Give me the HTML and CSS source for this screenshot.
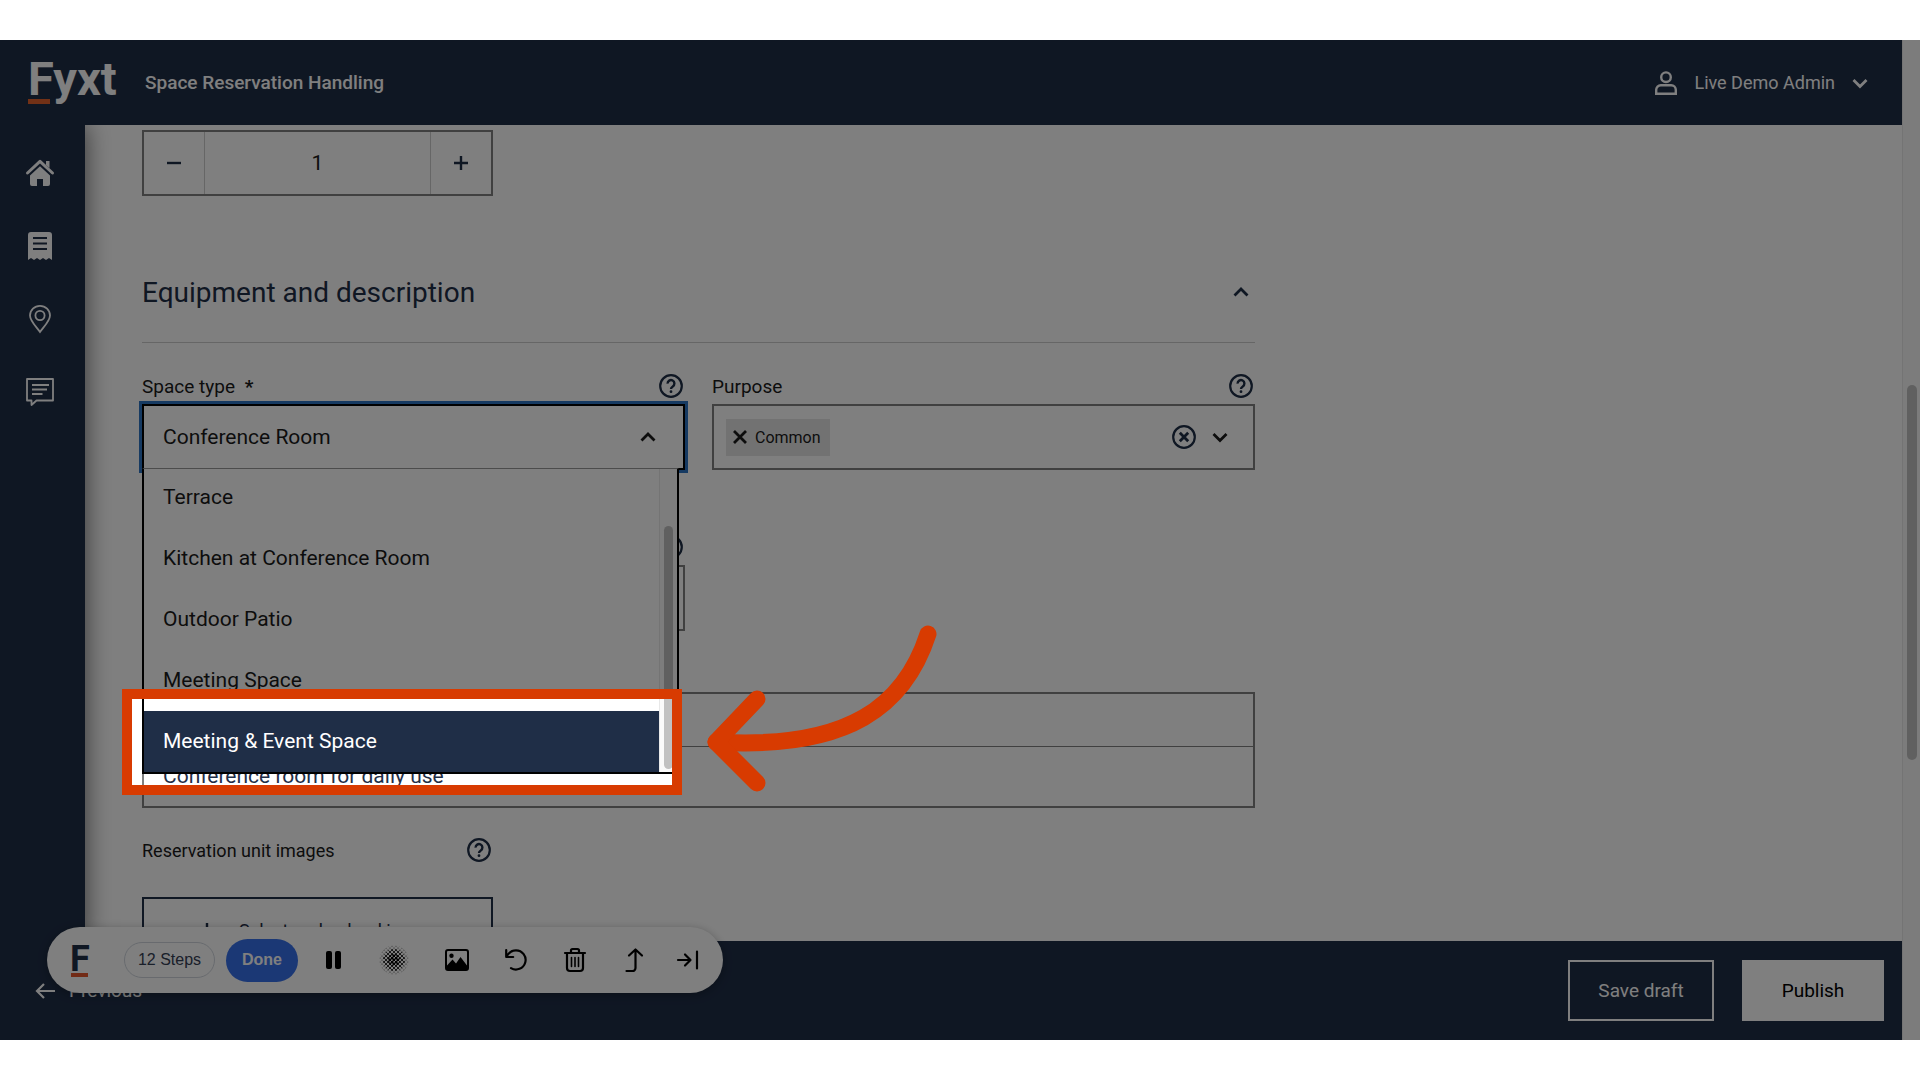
FILE: index.html
```html
<!DOCTYPE html>
<html lang="en">

<head>
  <meta charset="UTF-8">
  <meta name="viewport" content="width=device-width, initial-scale=1.0">
  <title>Space Reservation Handling</title>
  <link rel="stylesheet" href="styles.css">
</head>

<body>

  <svg class="sprite" aria-hidden="true">
    <symbol id="help" viewBox="0 0 24 24">
      <circle cx="12" cy="12" r="10.800" fill="none" stroke="currentColor" stroke-width="2.200" />
      <path d="M8.600 9.600a3.400 3.400 0 1 1 5.200 2.800c-1.200.8-1.800 1.300-1.800 2.600" fill="none" stroke="currentColor" stroke-width="2.400" />
      <circle cx="12" cy="17.700" r="1.400" fill="currentColor" />
    </symbol>
    <symbol id="chevron-down" viewBox="0 0 16 16">
      <path d="M1.500 5 8 11.500 14.500 5" fill="none" stroke="currentColor" stroke-width="2.800" />
    </symbol>
    <symbol id="chevron-up" viewBox="0 0 16 16">
      <path d="M1.500 11.500 8 5l6.500 6.500" fill="none" stroke="currentColor" stroke-width="2.800" />
    </symbol>
  </svg>

  <div class="app">
    <div class="page">

      <header class="header">
        <a class="logo" href="#">Fyxt</a>
        <span class="app-name">Space Reservation Handling</span>
        <button class="user-menu">
          <svg width="22" height="24" viewBox="0 0 22 24" fill="none" stroke="currentColor" stroke-width="2.400">
            <circle cx="11" cy="6.200" r="4.800" />
            <path d="M1.200 22.800v-4a4.600 4.600 0 0 1 4.600-4.600h10.400a4.600 4.600 0 0 1 4.600 4.600v4z" />
          </svg>
          Live Demo Admin
          <svg width="16" height="16"><use href="#chevron-down" /></svg>
        </button>
      </header>

      <div class="middle">
        <nav class="sidebar">
          <a href="#" aria-label="Home">
            <svg width="28" height="28" viewBox="0 0 28 28">
              <path d="M1.500 14 14 2.300 26.500 14" fill="none" stroke="currentColor" stroke-width="3" stroke-linecap="round" stroke-linejoin="round" />
              <path d="M20 2h3.500v7L20 6z" fill="currentColor" />
              <path d="M14 7.200 4 16.500V25a2 2 0 0 0 2 2h5v-7h6v7h5a2 2 0 0 0 2-2v-8.500z" fill="currentColor" />
            </svg>
          </a>
          <a href="#" aria-label="Reservations">
            <svg width="28" height="28" viewBox="0 0 28 28">
              <path d="M2 28V3a3 3 0 0 1 3-3h18a3 3 0 0 1 3 3v25l-3-2-3 2-3-2-3 2-3-2-3 2-3-2z" fill="currentColor" />
              <path class="icon-lines" d="M7 6h14M7 11.500h14M7 17h14" />
            </svg>
          </a>
          <a href="#" aria-label="Locations">
            <svg width="28" height="28" viewBox="0 0 28 28" fill="none" stroke="currentColor" stroke-width="1.800">
              <path d="M14 27C10 21.500 4 15.800 4 10.500a10 9.700 0 0 1 20 0C24 15.800 18 21.500 14 27z" />
              <circle cx="14" cy="10.500" r="4.600" />
            </svg>
          </a>
          <a href="#" aria-label="Messages">
            <svg width="28" height="28" viewBox="0 0 28 28" fill="none" stroke="currentColor" stroke-width="1.800">
              <path d="M1 1h26v21.500H10.500L5.500 27v-4.500H1z" stroke-linejoin="round" />
              <path d="M6 7h17M6 11.500h15M6 16h10.500" />
            </svg>
          </a>
        </nav>

        <main class="content">
          <div class="stepper">
            <button aria-label="Decrease"><svg width="16" height="16" viewBox="0 0 16 16"><path d="M1 8h14" stroke="currentColor" stroke-width="2.400" /></svg></button>
            <input type="text" value="1" aria-label="Amount">
            <button aria-label="Increase"><svg width="16" height="16" viewBox="0 0 16 16"><path d="M1 8h14M8 1v14" stroke="currentColor" stroke-width="2.400" /></svg></button>
          </div>

          <div class="section-head">
            <h2>Equipment and description</h2>
            <button class="icon-btn" aria-label="Collapse"><svg width="16" height="16"><use href="#chevron-up" /></svg></button>
          </div>

          <div class="fields">
            <div class="field">
              <div class="field-head">
                <label for="space-type">Space type <span class="required">*</span></label>
                <button class="icon-btn" aria-label="Help"><svg width="24" height="24"><use href="#help" /></svg></button>
              </div>
              <div class="select-wrap">
                <select class="box select" id="space-type">
                  <option>Conference Room</option>
                </select>
                <svg class="select-arrow" width="16" height="16"><use href="#chevron-up" /></svg>
                <div class="menu">
                  <ul class="menu-list" role="listbox">
                    <li role="option">Terrace</li>
                    <li role="option">Kitchen at Conference Room</li>
                    <li role="option">Outdoor Patio</li>
                    <li role="option">Meeting Space</li>
                    <li role="option" class="active" aria-selected="true">Meeting &amp; Event Space</li>
                  </ul>
                  <div class="menu-track"><div class="menu-thumb"></div></div>
                </div>
              </div>
            </div>

            <div class="field">
              <div class="field-head">
                <span>Purpose</span>
                <button class="icon-btn" aria-label="Help"><svg width="24" height="24"><use href="#help" /></svg></button>
              </div>
              <div class="box tags">
                <button class="tag">
                  <svg width="14" height="14" viewBox="0 0 14 14"><path d="M1 1l12 12M13 1 1 13" stroke="currentColor" stroke-width="2.800" /></svg>
                  Common
                </button>
                <button class="icon-btn clear" aria-label="Clear">
                  <svg width="24" height="24" viewBox="0 0 24 24" fill="none" stroke="currentColor">
                    <circle cx="12" cy="12" r="10.800" stroke-width="2.200" />
                    <path d="M7.800 7.800l8.400 8.400M16.200 7.800l-8.400 8.400" stroke-width="2.800" />
                  </svg>
                </button>
                <button class="icon-btn toggle" aria-label="Open"><svg width="16" height="16"><use href="#chevron-down" /></svg></button>
              </div>
            </div>

            <div class="field">
              <div class="field-head end">
                <button class="icon-btn" aria-label="Help"><svg width="24" height="24"><use href="#help" /></svg></button>
              </div>
              <input class="box" type="text" aria-label="Equipment">
            </div>
          </div>

          <div class="editor">
            <div class="editor-bar"></div>
            <textarea aria-label="Description">Conference room for daily use</textarea>
          </div>

          <div class="images">
            <div class="field-head">
              <span>Reservation unit images</span>
              <button class="icon-btn" aria-label="Help"><svg width="24" height="24"><use href="#help" /></svg></button>
            </div>
            <button class="upload">
              <svg width="16" height="16" viewBox="0 0 16 16"><path d="M1 8h14M8 1v14" stroke="currentColor" stroke-width="2.400" /></svg>
              Select and upload image
            </button>
          </div>
        </main>
      </div>

      <footer class="footer">
        <a class="previous" href="#">
          <svg width="20" height="16" viewBox="0 0 20 16" fill="none" stroke="currentColor" stroke-width="2.200"><path d="M9 1 2 8l7 7M2 8h18" /></svg>
          Previous
        </a>
        <button class="btn-outline">Save draft</button>
        <button class="btn-solid">Publish</button>
      </footer>
    </div>

    <div class="scrollbar"><div class="scroll-thumb"></div></div>

    <!-- recorder toolbar -->
    <div class="toolbar">
      <div class="mark">F</div>
      <button class="steps">12 Steps</button>
      <button class="done">Done</button>
      <div class="tools">
        <button aria-label="Pause">
          <svg width="20" height="24" viewBox="0 0 20 24"><rect x="3" y="3" width="6" height="18" rx="2" /><rect x="12" y="3" width="6" height="18" rx="2" /></svg>
        </button>
        <button aria-label="Blur">
          <svg width="30" height="30" viewBox="0 0 30 30">
            <defs>
              <pattern id="dots-s" width="4" height="4" patternUnits="userSpaceOnUse"><circle cx="1" cy="1" r=".5" /><circle cx="3" cy="3" r=".5" /></pattern>
              <pattern id="dots-m" width="4" height="4" patternUnits="userSpaceOnUse"><circle cx="1" cy="1" r="1" /><circle cx="3" cy="3" r="1" /></pattern>
              <pattern id="dots-l" width="4" height="4" patternUnits="userSpaceOnUse"><circle cx="1" cy="1" r="1.500" /><circle cx="3" cy="3" r="1.500" /></pattern>
            </defs>
            <circle cx="15" cy="15" r="14.500" fill="url(#dots-s)" />
            <circle cx="15" cy="15" r="11" fill="url(#dots-m)" />
            <circle cx="15" cy="15" r="6" fill="url(#dots-l)" />
          </svg>
        </button>
        <button aria-label="Image">
          <svg width="24" height="24" viewBox="0 0 24 24">
            <rect x="1" y="2" width="22" height="20" rx="2" fill="none" stroke="currentColor" stroke-width="2" />
            <circle cx="6.500" cy="7.800" r="2.200" />
            <path d="M2 21v-3.500l5.500-6 3.500 4 4.500-6.500 6.500 8.500V21z" />
          </svg>
        </button>
        <button aria-label="Undo">
          <svg width="22" height="24" viewBox="0 0 22 24" fill="none" stroke="currentColor" stroke-width="2.200" stroke-linecap="round" stroke-linejoin="round">
            <path d="M1.200 2v7h7M1.500 8.800C3.500 4.800 7 2.300 11 2.300a9.600 9.600 0 1 1-5 17.800" />
          </svg>
        </button>
        <button aria-label="Delete">
          <svg width="24" height="24" viewBox="0 0 24 24" fill="none" stroke="currentColor" stroke-width="2.200" stroke-linecap="round">
            <path d="M2 5h20M8 5V2.500A1.500 1.500 0 0 1 9.500 1h5A1.500 1.500 0 0 1 16 2.500V5M4 5v15a3 3 0 0 0 3 3h10a3 3 0 0 0 3-3V5" />
            <path d="M8.500 9.500v9M12 9.500v9M15.500 9.500v9" stroke-width="1.600" />
          </svg>
        </button>
        <button aria-label="Move">
          <svg width="20" height="24" viewBox="0 0 20 24" fill="none" stroke="currentColor" stroke-width="2.200" stroke-linecap="round" stroke-linejoin="round">
            <path d="M3.500 23h6a3 3 0 0 0 3-3V1.500M6 7.500l6.500-6 6.500 6" />
          </svg>
        </button>
        <button aria-label="Dock">
          <svg width="20" height="24" viewBox="0 0 20 24" fill="none" stroke="currentColor" stroke-width="2.200" stroke-linecap="round" stroke-linejoin="round">
            <path d="M-1 12h12M6 6.500l5.500 5.500L6 17.500M18 3.500v17" />
          </svg>
        </button>
      </div>
    </div>

    <!-- dims everything except the highlighted option -->
    <div class="spotlight"></div>
    <svg class="arrow" width="240" height="180" viewBox="0 0 240 180" fill="none" stroke="currentColor" stroke-width="17" stroke-linecap="round" stroke-linejoin="round">
      <path d="M228 14C205 85 150 130 16 122" />
      <path d="M57 79 16 122l41 41" />
    </svg>
  </div>

</body>

</html>
```

FILE: styles.css
```css
* {
  margin: 0;
  padding: 0;
  box-sizing: border-box;
}

body {
  height: 100vh;
  padding: 40px 0;
  background: #fff;
  color: #1a1a1a;
  font-family: Roboto, Arial, sans-serif;
  font-size: 19px;
}

button,
input,
select,
textarea {
  font: inherit;
  color: inherit;
  background: none;
  border: none;
  border-radius: 0;
}

button {
  cursor: pointer;
}

a {
  color: inherit;
  text-decoration: none;
}

svg {
  display: block;
  flex-shrink: 0;
  overflow: visible;
}

.sprite {
  position: absolute;
  width: 0;
  height: 0;
}

.app {
  position: relative;
  display: flex;
  height: 100%;
  overflow: hidden;
}

.page {
  flex: 1;
  min-width: 0;
  display: flex;
  flex-direction: column;
}

/* Header */
.header {
  position: relative;
  z-index: 2;
  display: flex;
  align-items: center;
  height: 85px;
  padding: 0 34px 0 28px;
  background: #1f2e47;
  color: #fff;
}

.logo {
  position: relative;
  width: 117px;
  padding-bottom: 8px;
  font-size: 47px;
  line-height: 60px;
  font-weight: 700;
}

.logo::after {
  content: "";
  position: absolute;
  left: 0;
  bottom: 13px;
  width: 22px;
  height: 5px;
  background: #e4622c;
}

.app-name {
  font-weight: 500;
}

.user-menu {
  display: flex;
  align-items: center;
  gap: 17px;
  margin-left: auto;
  font-size: 18px;
}

/* Sidebar */
.middle {
  flex: 1;
  min-height: 0;
  display: flex;
}

.sidebar {
  position: relative;
  z-index: 1;
  display: flex;
  flex-direction: column;
  align-items: center;
  gap: 45px;
  width: 85px;
  padding: 34px 5px 0 0;
  background: #1f2e47;
  color: #fff;
  box-shadow: 0 0 24px rgba(0, 0, 0, 0.6);
}

.icon-lines {
  stroke: #1f2e47;
  stroke-width: 2;
}

/* Form */
.content {
  flex: 1;
  min-width: 0;
  max-width: 1170px;
  padding: 5px 0 0 57px;
  overflow: hidden;
}

.stepper {
  display: flex;
  width: 351px;
  height: 66px;
  border: 2px solid #808080;
}

.stepper button {
  display: flex;
  align-items: center;
  justify-content: center;
  width: 60px;
  color: #1f2e47;
}

.stepper input {
  flex: 1;
  min-width: 0;
  border: solid #ccc;
  border-width: 0 1px;
  font-size: 21px;
  text-align: center;
}

.section-head {
  display: flex;
  align-items: center;
  justify-content: space-between;
  height: 101px;
  margin-top: 46px;
  padding-right: 6px;
  border-bottom: 1px solid #ccc;
  color: #1f2e47;
}

.section-head h2 {
  font-size: 28px;
  font-weight: 400;
}

.fields {
  display: grid;
  grid-template-columns: 1fr 1fr;
  gap: 59px 27px;
  margin-top: 25px;
}

.field-head {
  display: flex;
  align-items: center;
  justify-content: space-between;
  height: 36px;
  padding-right: 2px;
}

.field-head.end {
  justify-content: flex-end;
}

.required {
  margin-left: 5px;
  font-weight: 700;
}

.icon-btn {
  color: #1f2e47;
}

.box {
  display: block;
  width: 100%;
  height: 66px;
  border: 2px solid #808080;
}

.select-wrap {
  position: relative;
}

.select {
  appearance: none;
  padding: 0 19px;
  border-color: #000;
  outline: 3px solid #2d74c4;
  font-size: 21px;
}

.select-arrow {
  position: absolute;
  top: 25px;
  right: 29px;
}

.menu {
  position: absolute;
  z-index: 1;
  top: 64px;
  left: 0;
  right: 6px;
  display: flex;
  height: 306px;
  background: #fff;
  border: 2px solid #000;
  border-top: 1px solid #999;
}

.menu-list {
  flex: 1;
  display: flex;
  flex-direction: column;
  justify-content: flex-end;
  overflow: hidden;
  list-style: none;
}

.menu-list li {
  flex-shrink: 0;
  padding-left: 19px;
  font-size: 21px;
  line-height: 61px;
}

.menu-list .active {
  background: #1f2e47;
  color: #fff;
}

.menu-track {
  width: 18px;
  padding: 57px 4px 3px;
  background: #fafafa;
  border-left: 1px solid #e8e8e8;
}

.menu-thumb {
  height: 100%;
  border-radius: 5px;
  background: #c1c1c1;
}

.tags {
  display: flex;
  align-items: center;
  padding: 0 25px 0 12px;
}

.tag {
  display: flex;
  align-items: center;
  gap: 8px;
  height: 37px;
  padding: 0 9px 0 7px;
  background: #e5e5e5;
  font-size: 16px;
}

.clear {
  margin-left: auto;
}

.toggle {
  margin-left: 16px;
  color: #1a1a1a;
}

.editor {
  display: flex;
  flex-direction: column;
  height: 116px;
  margin-top: 61px;
  border: 2px solid #808080;
}

.editor-bar {
  height: 53px;
  border-bottom: 1px solid #808080;
}

.editor textarea {
  flex: 1;
  padding: 16px 19px 0;
  color: #1f2e47;
  font-size: 21px;
  line-height: 26px;
  resize: none;
  overflow: hidden;
}

.images {
  width: 351px;
  margin-top: 24px;
  font-size: 18px;
}

.upload {
  display: flex;
  align-items: center;
  justify-content: center;
  gap: 24px;
  width: 100%;
  height: 66px;
  margin-top: 29px;
  border: 2px solid #1f2e47;
  color: #1f2e47;
}

/* Footer */
.footer {
  position: relative;
  z-index: 2;
  display: flex;
  align-items: center;
  gap: 28px;
  height: 99px;
  padding: 0 18px 0 35px;
  background: #1f2e47;
  color: #fff;
}

.previous {
  display: flex;
  align-items: center;
  gap: 14px;
  margin-right: auto;
}

.btn-outline,
.btn-solid {
  height: 61px;
  border: 2px solid #fff;
}

.btn-outline {
  width: 146px;
}

.btn-solid {
  width: 142px;
  background: #fff;
  color: #000;
}

.scrollbar {
  width: 18px;
  padding: 345px 3px 0 4px;
  background: #f8f8f8;
  border-left: 1px solid #e8e8e8;
}

.scroll-thumb {
  height: 375px;
  border-radius: 5px;
  background: #c1c1c1;
}

/* Recorder toolbar */
.toolbar {
  position: absolute;
  z-index: 3;
  left: 47px;
  bottom: 47px;
  display: flex;
  align-items: center;
  height: 66px;
  padding: 0 24px 0 14px;
  border-radius: 33px;
  background: #fff;
  color: #000;
  box-shadow: 0 2px 10px rgba(0, 0, 0, 0.3);
  font-family: "Liberation Sans", Arial, sans-serif;
}

.mark {
  position: relative;
  width: 38px;
  height: 38px;
  margin-right: 25px;
  border-radius: 50%;
  color: #1f2e47;
  font-family: Roboto, sans-serif;
  font-size: 36px;
  line-height: 36px;
  font-weight: 700;
  text-align: center;
}

.mark::after {
  content: "";
  position: absolute;
  left: 10px;
  bottom: 2px;
  width: 17px;
  height: 4px;
  background: #e4562c;
}

.steps {
  width: 91px;
  height: 36px;
  margin-right: 11px;
  border: 1px solid #d0d5dd;
  border-radius: 18px;
  color: #344054;
  font-size: 16px;
}

.done {
  width: 72px;
  height: 43px;
  margin-right: 25px;
  border-radius: 22px;
  background: #3670ea;
  color: #fff;
  font-size: 16px;
  font-weight: 700;
}

.tools {
  display: flex;
  align-items: center;
  gap: 36px;
}

/* Highlight */
.spotlight {
  position: absolute;
  z-index: 4;
  top: 649px;
  left: 122px;
  width: 560px;
  height: 106px;
  border: 10px solid #d83b01;
  box-shadow: 0 0 0 2000px rgba(0, 0, 0, 0.5);
  pointer-events: none;
}

.arrow {
  position: absolute;
  z-index: 5;
  top: 580px;
  left: 700px;
  color: #d83b01;
  pointer-events: none;
}
```
